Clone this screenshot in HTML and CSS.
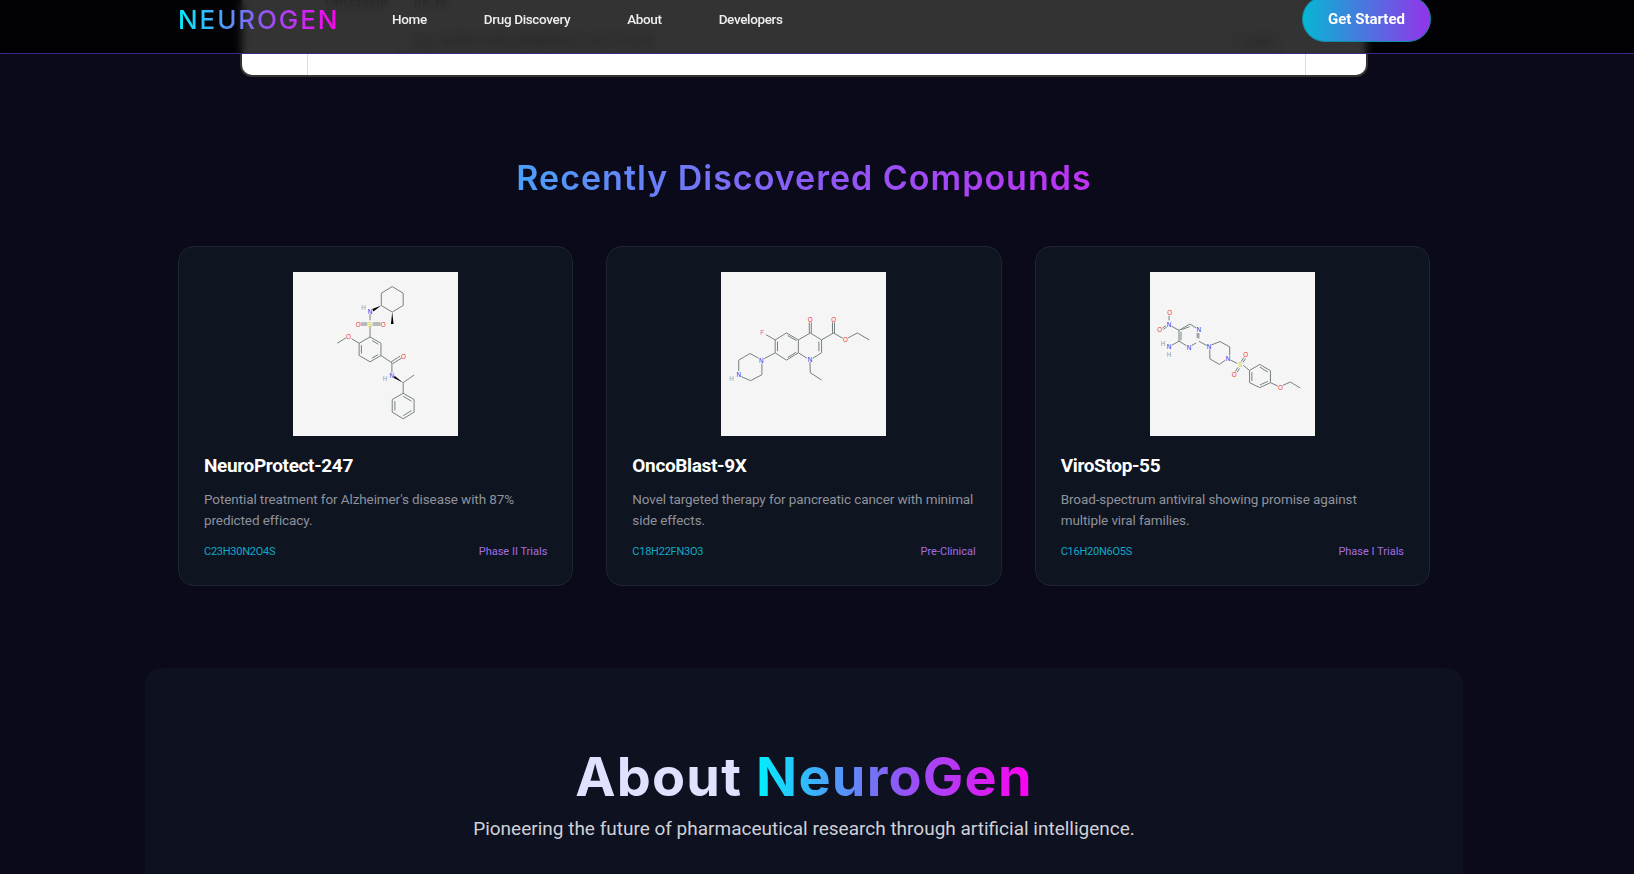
FILE: index.html

```html
<!DOCTYPE html>
<html lang="en">
<head>
  <meta charset="UTF-8">
  <meta name="viewport" content="width=device-width, initial-scale=1.0">
  <title>NeuroGen</title>
  <link rel="stylesheet" href="styles.css">
</head>
<body>
  <header class="site-header">
    <div class="header-inner">
      <div class="header-left">
        <a class="logo" href="#">NEUROGEN</a>
        <nav class="main-nav">
          <a href="#">Home</a>
          <a href="#">Drug Discovery</a>
          <a href="#">About</a>
          <a href="#">Developers</a>
        </nav>
      </div>
      <button class="cta" type="button">Get Started</button>
    </div>
  </header>

  <main class="page">
    <div class="viewer-panel">
      <div class="viewer-side"></div>
      <div class="viewer-main">
        <div class="viewer-row">
          <span>Descriptor</span>
          <span class="viewer-select">InChI</span>
        </div>
        <div class="viewer-row viewer-inputs">
          <div class="viewer-input">e.g. InChI=1S/C10H8O/c11-10-7-3-5-8</div>
          <div class="viewer-load">Load</div>
        </div>
      </div>
      <div class="viewer-side viewer-side-right"></div>
    </div>

    <section class="compounds">
      <h2 class="section-title">Recently Discovered Compounds</h2>
      <div class="compound-grid">

        <article class="compound-card">
          <div class="compound-image">
            <svg class="molecule" viewBox="9 6 495 495">
              <g class="bonds">
                <path d="M274 70L307 50L340 70L340 107L307 127L274 107Z"/>
                <path d="M240 133V152M240 172V202"/>
                <path d="M212 160H232M212 166H232M248 160H272M248 166H272"/>
                <path d="M240 202L273 221V258L240 277L207 258V221Z"/>
                <path d="M246 213L265 224M265 255L246 266M214 252V227"/>
                <path d="M207 221L184 207M167 205L141 221"/>
                <path d="M273 258L306 280M306 280V310"/>
                <path d="M304 277L331 260M308 283L335 266"/>
                <path d="M340 340L373 317M340 340V372"/>
                <path d="M340 372L373 391V429L340 449L307 429V391Z"/>
                <path d="M340 381L365 396M365 424L340 440M315 424V396"/>
              </g>
              <polygon class="wedge" points="247,118 250,125 274,107"/>
              <polygon class="wedge" points="307,127 303,163 311,163"/>
              <polygon class="wedge" points="314,319 312,326 340,340"/>
              <text class="atom atom-h" x="220" y="114">H</text>
              <text class="atom atom-n" x="240" y="125">N</text>
              <text class="atom atom-s" x="240" y="163">S</text>
              <text class="atom atom-o" x="204" y="163">O</text>
              <text class="atom atom-o" x="280" y="163">O</text>
              <text class="atom atom-o" x="175" y="201">O</text>
              <text class="atom atom-o" x="341" y="260">O</text>
              <text class="atom atom-n" x="306" y="318">N</text>
              <text class="atom atom-h" x="285" y="326">H</text>
            </svg>
          </div>
          <h3 class="compound-name">NeuroProtect-247</h3>
          <p class="compound-text">Potential treatment for Alzheimer's disease with 87% predicted efficacy.</p>
          <div class="compound-meta">
            <span class="formula">C23H30N2O4S</span>
            <span class="phase">Phase II Trials</span>
          </div>
        </article>

        <article class="compound-card">
          <div class="compound-image">
            <svg class="molecule" viewBox="6 6 495 495">
              <g class="bonds">
                <path d="M238 211L274 190L308 211V250L282 266M264 266L238 250V211"/>
                <path d="M238 211L202 190L168 211V250L202 272L238 250"/>
                <path d="M206 198L232 213M232 248L206 264M175 245V216M300 216V245"/>
                <path d="M271 190V158M277 190V158"/>
                <path d="M308 211L344 190M341 190V158M347 190V158"/>
                <path d="M344 190L372 206M388 205L416 190L452 211"/>
                <path d="M168 211L140 195M168 250L134 268"/>
                <path d="M273 278L274 310L308 332"/>
                <path d="M118 266L92 252L58 272V305M66 322L94 334L128 316V282"/>
              </g>
              <text class="atom atom-o" x="274" y="148">O</text>
              <text class="atom atom-o" x="345" y="148">O</text>
              <text class="atom atom-o" x="380" y="210">O</text>
              <text class="atom atom-f" x="129" y="189">F</text>
              <text class="atom atom-n" x="273" y="270">N</text>
              <text class="atom atom-n" x="126" y="272">N</text>
              <text class="atom atom-n" x="58" y="316">N</text>
              <text class="atom atom-h" x="36" y="326">H</text>
            </svg>
          </div>
          <h3 class="compound-name">OncoBlast-9X</h3>
          <p class="compound-text">Novel targeted therapy for pancreatic cancer with minimal side effects.</p>
          <div class="compound-meta">
            <span class="formula">C18H22FN3O3</span>
            <span class="phase">Pre-Clinical</span>
          </div>
        </article>

        <article class="compound-card">
          <div class="compound-image">
            <svg class="molecule" viewBox="6 6 495 495">
              <g class="bonds">
                <path d="M92 182L125 163L144 175M152 190V207M144 220L130 228M114 228L92 215V182"/>
                <path d="M99 180L124 171M147 190V205M98 212V186"/>
                <path d="M92 182L70 170M62 152V138M52 168L42 175M55 172L45 179"/>
                <path d="M92 215L70 227"/>
                <path d="M152 215L176 228"/>
                <path d="M190 226L216 216L245 232V258M232 272L214 285L185 268V240"/>
                <path d="M248 272L268 282M286 288L305 303"/>
                <path d="M280 276L288 264M285 279L293 267M270 294L262 306M275 297L267 309"/>
                <path d="M336 285L368 304V340L336 355L305 340V303Z"/>
                <path d="M336 293L360 308M360 336L336 347M312 335V308"/>
                <path d="M368 340L390 350M406 348L428 338L458 356"/>
              </g>
              <text class="atom atom-o" x="64" y="129">O</text>
              <text class="atom atom-n" x="62" y="163">N</text>
              <text class="atom atom-o" x="34" y="180">O</text>
              <text class="atom atom-n" x="152" y="181">N</text>
              <text class="atom atom-n" x="122" y="233">N</text>
              <text class="atom atom-n" x="62" y="232">N</text>
              <text class="atom atom-h" x="44" y="222">H</text>
              <text class="atom atom-h" x="62" y="254">H</text>
              <text class="atom atom-n" x="183" y="232">N</text>
              <text class="atom atom-n" x="240" y="267">N</text>
              <text class="atom atom-s" x="277" y="286">S</text>
              <text class="atom atom-o" x="293" y="256">O</text>
              <text class="atom atom-o" x="259" y="314">O</text>
              <text class="atom atom-o" x="398" y="354">O</text>
            </svg>
          </div>
          <h3 class="compound-name">ViroStop-55</h3>
          <p class="compound-text">Broad-spectrum antiviral showing promise against multiple viral families.</p>
          <div class="compound-meta">
            <span class="formula">C16H20N6O5S</span>
            <span class="phase">Phase I Trials</span>
          </div>
        </article>

      </div>
    </section>

    <section class="about">
      <h2 class="about-title">About <span class="gradient-text">NeuroGen</span></h2>
      <p class="about-lead">Pioneering the future of pharmaceutical research through artificial intelligence.</p>
    </section>
  </main>
</body>
</html>
```

FILE: styles.css

```css
html, body {
  height: 874px;
  overflow: hidden;
}
body {
  margin: 0;
  padding: 0;
  background: #0a0a1a;
  color: #fff;
  font-family: Roboto, "Liberation Sans", sans-serif;
}
a {
  color: inherit;
  text-decoration: none;
}

/* header */
.site-header {
  position: fixed;
  top: 0;
  left: 0;
  right: 0;
  z-index: 10;
  height: 53px;
  background: rgba(0, 0, 0, 0.8);
  backdrop-filter: blur(4px);
  border-bottom: 1px solid #352d80;
}
.header-inner {
  width: 1253px;
  height: 38px;
  margin-left: 178px;
  display: flex;
  align-items: center;
  justify-content: space-between;
}
.header-left {
  display: flex;
  align-items: center;
}
.logo {
  width: 160px;
  font-family: Inter, sans-serif;
  font-size: 26px;
  font-weight: 500;
  letter-spacing: 1.9px;
  white-space: nowrap;
  background: linear-gradient(90deg, #00f0ff, #8a5cf6, #ff00f0);
  -webkit-background-clip: text;
  background-clip: text;
  color: transparent;
}
.main-nav {
  display: flex;
  gap: 57px;
  margin-left: 54px;
  font-size: 13.5px;
  font-weight: 500;
  letter-spacing: -0.35px;
  color: #eee;
}
.cta {
  width: 129px;
  height: 46px;
  border: 1px solid #0e8fa8;
  border-radius: 24px;
  background: linear-gradient(90deg, #06b6d4, #9333ea);
  color: #fff;
  font-family: inherit;
  font-size: 15px;
  font-weight: bold;
}

/* page */
.page {
  width: 1608px;
}

/* the panel left over from the section above, mostly under the header */
.viewer-panel {
  box-sizing: border-box;
  width: 1128px;
  height: 77px;
  margin: 0 auto;
  display: grid;
  grid-template-columns: 65px 1fr 60px;
  background: #fff;
  color: #999;
  border: 2px solid #333;
  border-top: none;
  border-radius: 0 0 12px 12px;
  overflow: hidden;
  font-family: "Liberation Sans", sans-serif;
  font-size: 14px;
}
.viewer-main {
  border-left: 1px solid #ddd;
  border-right: 1px solid #ddd;
  padding-left: 17px;
}
.viewer-row {
  display: flex;
  gap: 25px;
  height: 30px;
  margin-top: -6px;
}
.viewer-select {
  width: 160px;
}
.viewer-inputs {
  margin-top: 6px;
  margin-left: 73px;
  gap: 9px;
  height: 24px;
  margin-right: 24px;
}
.viewer-input {
  flex: 1;
  border: 1px solid #bbb;
  border-radius: 4px;
  padding: 2px 14px;
}
.viewer-load {
  width: 48px;
  border: 1px solid #bbb;
  text-align: center;
  padding-top: 2px;
}

/* compounds */
.compounds {
  width: 1252px;
  margin: 0 auto;
}
.section-title {
  margin: 77px 0 44px;
  font-family: Inter, sans-serif;
  font-size: 34px;
  font-weight: 600;
  letter-spacing: 1px;
  line-height: 48px;
  text-align: center;
  background: linear-gradient(90deg, #00f0ff, #8a5cf6, #ff00f0);
  -webkit-background-clip: text;
  background-clip: text;
  color: transparent;
}
.compound-grid {
  display: grid;
  grid-template-columns: repeat(3, 1fr);
  gap: 33px;
}
.compound-card {
  box-sizing: border-box;
  height: 340px;
  padding: 25px;
  background: #0e1420;
  border: 1px solid #1e2533;
  border-radius: 16px;
}
.compound-image {
  width: 165px;
  height: 164px;
  margin: 0 auto 17px;
  background: #f5f5f5;
}
.molecule {
  display: block;
  width: 100%;
  height: 100%;
}
.bonds path {
  fill: none;
  stroke: #75807f;
  stroke-width: 3;
}
.wedge {
  fill: #000;
}
.atom {
  font-family: "Liberation Sans", sans-serif;
  font-size: 19px;
  text-anchor: middle;
  dominant-baseline: central;
}
.atom-h { fill: #8aa0a0; }
.atom-n { fill: #2a2aee; }
.atom-o { fill: #f03030; }
.atom-s { fill: #c8c820; }
.atom-f { fill: #d060b0; }
.compound-name {
  margin: 0;
  font-size: 19px;
  line-height: 26px;
  font-weight: bold;
  letter-spacing: -0.35px;
  color: #fff;
}
.compound-text {
  margin: 10px 0 0;
  font-size: 13.5px;
  line-height: 21px;
  letter-spacing: -0.1px;
  color: #8e929c;
}
.compound-meta {
  display: flex;
  justify-content: space-between;
  margin-top: 13px;
  font-size: 11px;
  line-height: 16px;
}
.formula {
  color: #0fa9c9;
  letter-spacing: -0.25px;
}
.phase {
  color: #a66ee0;
}

/* about */
.about {
  width: 1318px;
  height: 400px;
  margin: 82px auto 0;
  padding-top: 73px;
  box-sizing: border-box;
  background: #0d1120;
  border-radius: 16px;
  text-align: center;
}
.about-title {
  margin: 0;
  font-family: Inter, sans-serif;
  font-size: 54px;
  line-height: 72px;
  font-weight: 700;
  letter-spacing: 1.2px;
  color: #e0e0ff;
}
.gradient-text {
  background: linear-gradient(90deg, #00f0ff, #8a5cf6, #ff00f0);
  -webkit-background-clip: text;
  background-clip: text;
  color: transparent;
}
.about-lead {
  margin: 1px 0 0;
  font-size: 19px;
  line-height: 30px;
  color: #d0d0d8;
}
```
